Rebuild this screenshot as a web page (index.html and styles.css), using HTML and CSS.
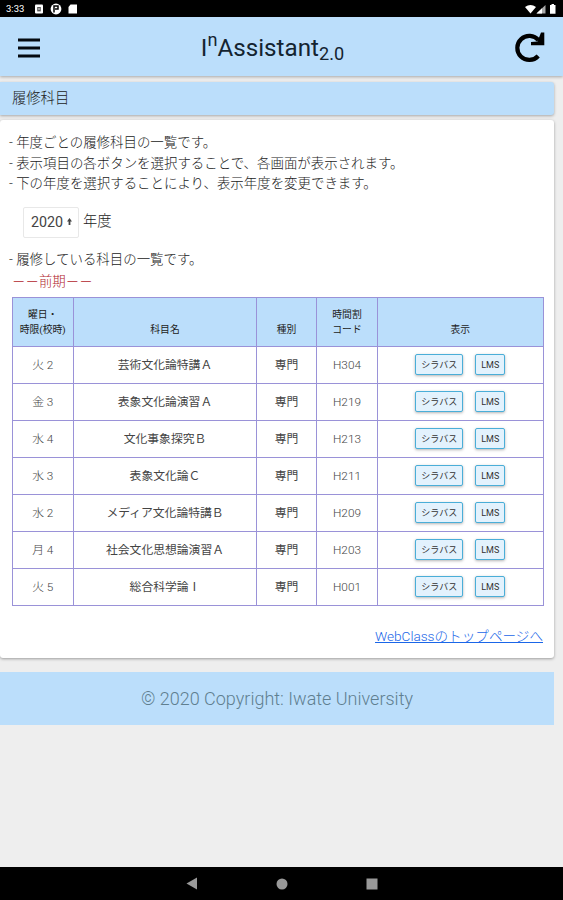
FILE: index.html
```
<!DOCTYPE html>
<html lang="ja">
<head>
<meta charset="utf-8">
<title>InAssistant 2.0</title>
<link rel="stylesheet" href="styles.css">
</head>
<body>
<div class="status">
  <span class="clock">3:33</span>
  <svg class="notes" width="46" height="12" viewBox="0 0 46 12">
    <rect x="1" y="1.5" width="8" height="9" rx="1" fill="#fff"/><path d="M3.2 4h3.6v4.4H3.2z" fill="#555"/><path d="M4.4 5.2h1.2v1.6H4.4z" fill="#fff"/>
    <circle cx="22" cy="6" r="5.4" fill="#fff"/><path d="M20 9.5V3h4v3h-3" fill="none" stroke="#000" stroke-width="1.5"/>
    <path d="M36.500 1.5h6.500v9h-8.500V4z" fill="#fff"/>
  </svg>
  <svg class="signals" width="33" height="12" viewBox="0 0 33 12">
    <path d="M0 4Q5.500 0 11 4L5.500 10.500z" fill="#fff"/>
    <path d="M11.500 10.500L20.500 2v8.500z" fill="#aaa"/><path d="M11.500 10.500L17 5.300v5.200z" fill="#fff"/>
    <path d="M25 2h1.500V1h2.500v1h1.500v8.700H25z" fill="#fff"/>
  </svg>
</div>
<header class="appbar">
  <svg width="22" height="20" viewBox="0 0 22 20"><path d="M0 2h22M0 10h22M0 18h22" stroke="#050a10" stroke-width="3"/></svg>
  <h1>I<sup>n</sup>Assistant<sub>2.0</sub></h1>
  <svg width="30" height="31" viewBox="0 0 30 31"><path d="M23.200 24A12 12 0 1 1 23.500 8.200" fill="none" stroke="#000" stroke-width="4.200"/><path d="M26 .500h3.300v12.800H16V10l6.500-.500z" fill="#000"/></svg>
</header>
<main>
  <h2 class="heading">履修科目</h2>
  <section class="card">
    <p>- 年度ごとの履修科目の一覧です。<br>- 表示項目の各ボタンを選択することで、各画面が表示されます。<br>- 下の年度を選択することにより、表示年度を変更できます。</p>
    <div class="year"><span class="select">2020<svg width="5" height="8" viewBox="0 0 5 8"><path d="M0 3.500L2.500 0 5 3.500zM1.600 3h1.800v4H1.600z" fill="#444"/></svg></span>年度</div>
    <p>- 履修している科目の一覧です。</p>
    <p class="term">－－前期－－</p>
    <table>
      <colgroup><col class="c1"><col class="c2"><col class="c3"><col class="c4"><col class="c5"></colgroup>
      <thead><tr><th>曜日・<br>時限(校時)</th><th>科目名</th><th>種別</th><th>時間割<br>コード</th><th>表示</th></tr></thead>
      <tbody>
        <tr><td>火 2</td><td class="name">芸術文化論特講Ａ</td><td class="name">専門</td><td>H304</td><td><span class="btn wide">シラバス</span><span class="btn">LMS</span></td></tr>
        <tr><td>金 3</td><td class="name">表象文化論演習Ａ</td><td class="name">専門</td><td>H219</td><td><span class="btn wide">シラバス</span><span class="btn">LMS</span></td></tr>
        <tr><td>水 4</td><td class="name">文化事象探究Ｂ</td><td class="name">専門</td><td>H213</td><td><span class="btn wide">シラバス</span><span class="btn">LMS</span></td></tr>
        <tr><td>水 3</td><td class="name">表象文化論Ｃ</td><td class="name">専門</td><td>H211</td><td><span class="btn wide">シラバス</span><span class="btn">LMS</span></td></tr>
        <tr><td>水 2</td><td class="name">メディア文化論特講Ｂ</td><td class="name">専門</td><td>H209</td><td><span class="btn wide">シラバス</span><span class="btn">LMS</span></td></tr>
        <tr><td>月 4</td><td class="name">社会文化思想論演習Ａ</td><td class="name">専門</td><td>H203</td><td><span class="btn wide">シラバス</span><span class="btn">LMS</span></td></tr>
        <tr><td>火 5</td><td class="name">総合科学論Ⅰ</td><td class="name">専門</td><td>H001</td><td><span class="btn wide">シラバス</span><span class="btn">LMS</span></td></tr>
      </tbody>
    </table>
    <a class="link" href="#">WebClassのトップページへ</a>
  </section>
  <footer>© 2020 Copyright: Iwate University</footer>
</main>
<nav>
  <svg width="12" height="13" viewBox="0 0 12 13"><path d="M11 .500v12L.500 6.500z" fill="#999"/></svg>
  <svg width="12" height="12" viewBox="0 0 12 12"><circle cx="6" cy="6" r="5.500" fill="#999"/></svg>
  <svg width="12" height="12" viewBox="0 0 12 12"><rect x=".5" y=".5" width="11" height="11" fill="#999"/></svg>
</nav>
</body>
</html>
```
FILE: styles.css
```
* { box-sizing: border-box; }
body {
  margin: 0;
  height: 900px;
  display: flex;
  flex-direction: column;
  overflow: hidden;
  background: #eee;
  color: #222;
  font-family: Roboto, "Noto Sans CJK JP", sans-serif;
  font-size: 13.45px;
  font-weight: 300;
  line-height: 20.5px;
}
svg { display: block; flex: none; }
h1, h2, p { margin: 0; font-weight: inherit; }
.status {
  height: 17px;
  flex: none;
  display: flex;
  align-items: center;
  padding: 1px 5px 0 6px;
  background: #000;
  color: #fff;
}
.clock { width: 28px; font-size: 9.5px; font-weight: 400; line-height: 12px; }
.signals { margin-left: auto; }
.appbar {
  height: 59px;
  flex: none;
  display: flex;
  align-items: center;
  justify-content: space-between;
  padding: 2px 18px 0;
  background: #bbdefb;
  box-shadow: 0 1px 3px rgba(0, 0, 0, .3);
}
h1 { margin-right: 10px; font-size: 24.2px; font-weight: 400; line-height: 30px; color: #142430; white-space: nowrap; }
sup, sub { font-size: 75%; line-height: 0; position: relative; vertical-align: baseline; }
sup { top: -.5em; }
sub { bottom: -.25em; }
main { width: 554px; flex: 1; padding-top: 6px; }
.heading {
  height: 33px;
  padding-left: 12px;
  font-size: 14.3px;
  line-height: 32px;
  background: #bbdefb;
  border-radius: 0 3px 3px 0;
  box-shadow: 0 1px 3px rgba(0, 0, 0, .3);
}
.card {
  height: 538px;
  margin: 5px 0 14px;
  padding: 13px 11px 0 9px;
  background: #fff;
  border-radius: 3px;
  box-shadow: 0 1px 3px rgba(0, 0, 0, .35);
}
.year { display: flex; gap: 4px; margin: 12px 0 13px 14px; height: 30px; line-height: 28px; font-size: 14.3px; }
.select {
  display: flex;
  align-items: center;
  gap: 4px;
  width: 56px;
  height: 31px;
  padding-left: 7px;
  border: 1px solid #e8e8e8;
  border-radius: 2px;
  font-weight: 400;
  color: #444;
}
.term { margin: 2px 0 4px 3px; color: #b01c2c; }
table {
  width: 532px;
  margin-left: 2.500px;
  table-layout: fixed;
  border-collapse: collapse;
  text-align: center;
}
.c1 { width: 61.500px; }
.c2 { width: 183px; }
.c3 { width: 60px; }
.c4 { width: 61px; }
th, td { padding: 0; border: 1px solid #9a92d8; }
th {
  height: 49px;
  padding-bottom: 9px;
  vertical-align: bottom;
  background: #bbdefb;
  font-size: 9.8px;
  font-weight: 400;
  line-height: 15px;
}
td { height: 37px; font-size: 11.8px; line-height: 18px; color: #444; }
.name { font-weight: 400; color: #444; }
.btn {
  display: inline-block;
  width: 30px;
  height: 21px;
  border: 1px solid #4aaed8;
  border-radius: 2px;
  background: #e3f2fd;
  box-shadow: 0 1px 3px rgba(0, 0, 0, .3);
  font-size: 9px;
  font-weight: 400;
  line-height: 20px;
  color: #333;
  vertical-align: middle;
}
.wide { width: 48px; margin-right: 12px; }
.link { display: block; width: fit-content; margin: 20px 0 0 auto; font-size: 13.6px; color: #1a66e8; text-decoration: underline; }
footer { height: 53px; background: #bbdefb; color: #607f90; font-size: 18px; line-height: 53px; text-align: center; }
nav {
  height: 33px;
  flex: none;
  display: flex;
  align-items: center;
  justify-content: center;
  gap: 78px;
  background: #000;
}
```
